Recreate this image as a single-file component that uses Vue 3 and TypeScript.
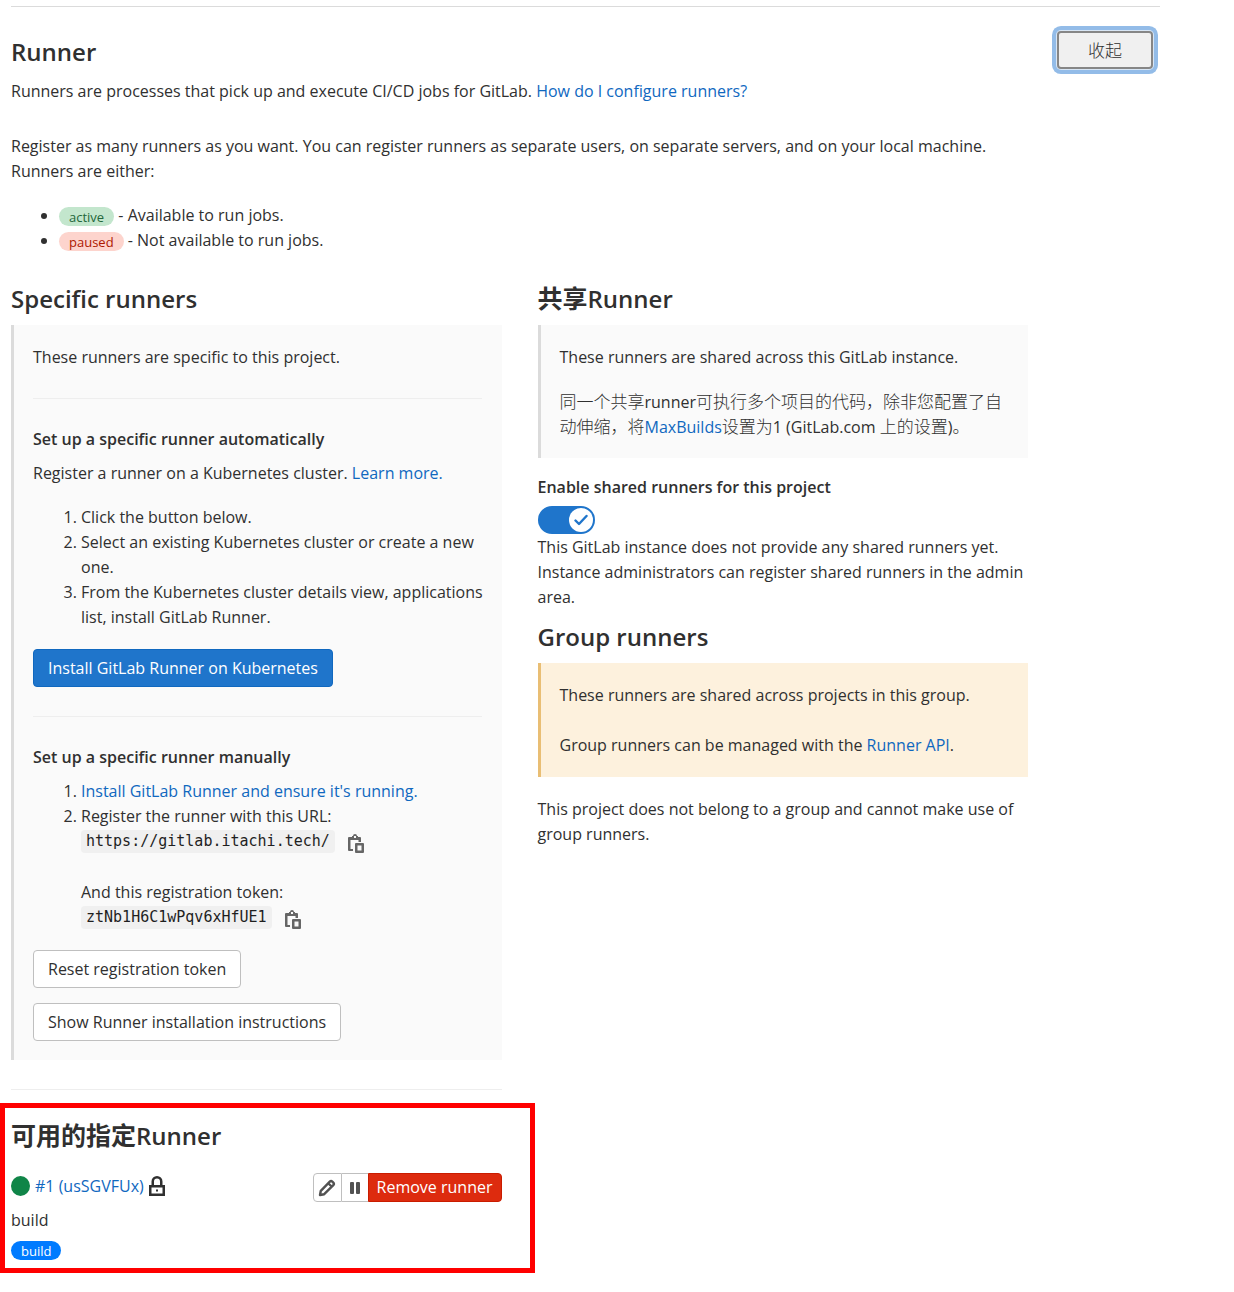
<script setup lang="ts">
import { ref } from 'vue'

const sharedEnabled = ref(true)

const installSteps: string[] = [
  'Click the button below.',
  'Select an existing Kubernetes cluster or create a new one.',
  'From the Kubernetes cluster details view, applications list, install GitLab Runner.',
]

const registrationUrl = 'https://gitlab.itachi.tech/'
const registrationToken = 'ztNb1H6C1wPqv6xHfUE1'
</script>

<template>
  <main class="settings">
    <header class="header">
      <div>
        <h2 class="title">Runner</h2>
        <p class="text">
          Runners are processes that pick up and execute CI/CD jobs for GitLab.
          <a href="#configure">How do I configure runners?</a>
        </p>
      </div>
      <button type="button" class="collapse"><span class="cjk">收起</span></button>
    </header>

    <section class="intro">
      <p class="text">
        Register as many runners as you want. You can register runners as separate users, on separate servers, and on your local machine.<br />
        Runners are either:
      </p>
      <ul class="states">
        <li><span class="badge badge-active">active</span> - Available to run jobs.</li>
        <li><span class="badge badge-paused">paused</span> - Not available to run jobs.</li>
      </ul>
    </section>

    <div class="columns">
      <div class="column">
        <h2 class="title">Specific runners</h2>
        <div class="callout">
          <p class="text">These runners are specific to this project.</p>
          <hr class="rule" />
          <h3 class="subtitle">Set up a specific runner automatically</h3>
          <p class="text">Register a runner on a Kubernetes cluster. <a href="#learn">Learn more.</a></p>
          <ol class="steps spaced">
            <li v-for="step in installSteps" :key="step">{{ step }}</li>
          </ol>
          <button type="button" class="btn btn-confirm">Install GitLab Runner on Kubernetes</button>
          <hr class="rule" />
          <h3 class="subtitle">Set up a specific runner manually</h3>
          <ol class="steps">
            <li><a href="#install">Install GitLab Runner and ensure it's running.</a></li>
            <li>
              Register the runner with this URL:
              <div class="copy-row">
                <code>{{ registrationUrl }}</code>
                <button type="button" class="copy" aria-label="Copy URL">
                  <svg viewBox="0 0 16 19" width="16" height="19">
                    <path fill="currentColor" fill-rule="evenodd" d="M4 2H5Q5 0 7 0T9 2H10V3H12Q13 3 13 4V8H10.500V6H2.500V15H5V17H1Q0 17 0 16V4Q0 3 1 3H4ZM6 2V4H8V2ZM8 9H15Q16 9 16 10V18Q16 19 15 19H8Q7 19 7 18V10Q7 9 8 9ZM9.500 11.500V16.500H13.500V11.500Z" />
                  </svg>
                </button>
              </div>
              <div class="token-label">And this registration token:</div>
              <div class="copy-row">
                <code>{{ registrationToken }}</code>
                <button type="button" class="copy" aria-label="Copy token">
                  <svg viewBox="0 0 16 19" width="16" height="19">
                    <path fill="currentColor" fill-rule="evenodd" d="M4 2H5Q5 0 7 0T9 2H10V3H12Q13 3 13 4V8H10.500V6H2.500V15H5V17H1Q0 17 0 16V4Q0 3 1 3H4ZM6 2V4H8V2ZM8 9H15Q16 9 16 10V18Q16 19 15 19H8Q7 19 7 18V10Q7 9 8 9ZM9.500 11.500V16.500H13.500V11.500Z" />
                  </svg>
                </button>
              </div>
            </li>
          </ol>
          <div class="actions">
            <button type="button" class="btn">Reset registration token</button>
            <button type="button" class="btn">Show Runner installation instructions</button>
          </div>
        </div>
        <hr class="divider" />
        <section class="available">
          <h2 class="title"><span class="cjk">可用的指定</span>Runner</h2>
          <div class="runner">
            <div class="runner-name">
              <span class="status"></span>
              <a href="#runner-1">#1 (usSGVFUx)</a>
              <svg class="lock" viewBox="0 0 16 20" width="16" height="20">
                <path fill="currentColor" fill-rule="evenodd" d="M2.500 9V5.500a5.500 5.500 0 0 1 11 0V9H16V20H0V9ZM5 9H11V5.500a3 3 0 0 0-6 0ZM2.500 11.500V17.500H13.500V11.500ZM7 13.500H9V15.500H7Z" />
              </svg>
            </div>
            <div class="group">
              <button type="button" class="small edit" aria-label="Edit">
                <svg viewBox="0 0 18 18" width="18" height="18" fill="none" stroke="currentColor" stroke-width="2.400" stroke-linejoin="round">
                  <path d="M2 16l.8-4.200L11.800 2.700a1.800 1.800 0 0 1 2.500 0l1 1a1.800 1.800 0 0 1 0 2.500L6.200 15.200zM10.500 4.500l3 3" />
                </svg>
              </button>
              <button type="button" class="small pause" aria-label="Pause">
                <svg viewBox="0 0 10 14" width="10" height="14" fill="currentColor">
                  <rect x="0" y="1" width="4" height="12" rx="1" />
                  <rect x="6" y="1" width="4" height="12" rx="1" />
                </svg>
              </button>
              <button type="button" class="small remove">Remove runner</button>
            </div>
          </div>
          <p class="text description">build</p>
          <span class="badge badge-tag">build</span>
        </section>
      </div>

      <div class="column">
        <h2 class="title"><span class="cjk">共享</span>Runner</h2>
        <div class="callout shared">
          <p class="text">These runners are shared across this GitLab instance.</p>
          <p class="text chinese">
            <span class="cjk">同一个共享</span>runner<span class="cjk">可执行多个项目的代码，除非您配置了自<br />动伸缩，将</span><a href="#maxbuilds">MaxBuilds</a><span class="cjk">设置为</span>1 (GitLab.com <span class="cjk">上的设置</span>)<span class="cjk">。</span>
          </p>
        </div>
        <label class="toggle-label" for="shared-toggle">Enable shared runners for this project</label>
        <span class="toggle">
          <input id="shared-toggle" v-model="sharedEnabled" type="checkbox" />
          <svg class="tick" viewBox="0 0 14 12" width="14" height="12" fill="none" stroke="currentColor" stroke-width="2.400" stroke-linecap="round" stroke-linejoin="round">
            <path d="M1.500 6.500L5 10L12.500 2" />
          </svg>
        </span>
        <p class="text">
          This GitLab instance does not provide any shared runners yet. Instance administrators can register shared runners in the admin area.
        </p>
        <h2 class="title group-title">Group runners</h2>
        <div class="callout warning">
          <p class="text">These runners are shared across projects in this group.</p>
          <p class="text managed">Group runners can be managed with the <a href="#api">Runner API</a>.</p>
        </div>
        <p class="text no-group">This project does not belong to a group and cannot make use of group runners.</p>
      </div>
    </div>
  </main>
</template>

<style>
body {
  background: #fff;
}
</style>

<style scoped>
* {
  box-sizing: border-box;
}
.settings {
  margin: 6px 74px 0 11px;
  border-top: 1px solid #dbdbdb;
  color: #303030;
  font-family: "Open Sans", "Noto Sans CJK SC", sans-serif;
  font-size: 16px;
  line-height: 25px;
}
a {
  color: #1068bf;
  text-decoration: none;
}
.cjk {
  font-family: "Noto Sans CJK SC", sans-serif;
  font-size: 17px;
  font-weight: 300;
  line-height: 1;
}
.title {
  margin: 0;
  font-size: 24px;
  font-weight: 600;
  line-height: 30px;
}
.title .cjk {
  font-size: 25px;
  font-weight: 700;
}
.text {
  margin: 0;
}
.header {
  display: flex;
  justify-content: space-between;
  align-items: flex-start;
  padding-top: 24px;
}
.header .title {
  margin: 6px 0 12px;
}
.collapse {
  width: 96px;
  height: 38px;
  margin-right: 7px;
  padding: 2px 0 0;
  border: 2px solid #868686;
  border-radius: 4px;
  background: #f0f0f0;
  box-shadow: 0 0 0 1px #d8e6f5, 0 0 0 5px #93bce8;
  color: #303030;
  font: inherit;
}
.intro {
  padding-top: 30px;
}
.states {
  margin: 19px 0 0;
  padding-left: 48px;
}
.badge {
  display: inline-block;
  height: 19px;
  padding: 0 10px;
  border-radius: 10px;
  font-size: 13px;
  line-height: 20px;
  vertical-align: middle;
}
.badge-active {
  background: #c3e6cd;
  color: #24663b;
}
.badge-paused {
  background: #fdd4cd;
  color: #ae1800;
}
.badge-tag {
  display: block;
  width: max-content;
  background: #007bff;
  color: #fff;
}
.columns {
  display: grid;
  grid-template-columns: 1fr 1fr;
  gap: 36px;
  margin-right: 132px;
  padding-top: 31px;
}
.column {
  min-width: 0;
}
.callout {
  margin-top: 11px;
  padding: 20px 20px 19px 19px;
  border-left: 3px solid #dbdbdb;
  background: #fafafa;
}
.rule {
  height: 1px;
  margin: 28px 0;
  border: 0;
  background: #eee;
}
.subtitle {
  margin: 0 0 9px;
  font-size: 16px;
  font-weight: 600;
}
.steps {
  margin: 0;
  padding-left: 48px;
}
.steps.spaced {
  margin: 19px -16px 19px 0;
}
.btn {
  display: block;
  height: 38px;
  padding: 0 14px;
  border: 1px solid #bfbfbf;
  border-radius: 4px;
  background: #fff;
  color: #303030;
  font: inherit;
}
.btn-confirm {
  margin-bottom: 29px;
  border-color: #1068bf;
  background: #1f75cb;
  color: #fff;
}
.copy-row {
  display: flex;
  align-items: flex-start;
  gap: 13px;
  height: 27px;
}
code {
  height: 23px;
  margin-top: 1px;
  padding: 0 5px;
  border-radius: 4px;
  background: #f0f0f0;
  color: #1f1f1f;
  font-family: "DejaVu Sans Mono", monospace;
  font-size: 15px;
  line-height: 23px;
}
.copy {
  height: 19px;
  margin-top: 5px;
  padding: 0;
  border: 0;
  background: none;
  color: #666;
}
.copy svg {
  display: block;
}
.token-label {
  margin-top: 24px;
}
.actions {
  display: flex;
  flex-direction: column;
  align-items: flex-start;
  gap: 15px;
  margin-top: 18px;
}
.divider {
  height: 1px;
  margin: 29px 0 13px;
  border: 0;
  background: #eee;
}
.available {
  margin: 0 -33px 0 -11px;
  padding: 13px 28px 8px 6px;
  border: 5px solid #f00;
}
.runner {
  display: flex;
  align-items: center;
  justify-content: space-between;
  margin-top: 22px;
}
.runner-name {
  display: flex;
  align-items: center;
  gap: 5px;
  height: 26px;
  align-self: flex-start;
}
.status {
  width: 19px;
  height: 20px;
  border-radius: 50%;
  background: #108548;
}
.group {
  display: flex;
}
.small {
  display: flex;
  align-items: center;
  justify-content: center;
  height: 29px;
  padding: 0;
  border: 1px solid #bfbfbf;
  background: #fff;
  color: #525252;
  font: inherit;
}
.edit {
  width: 29px;
  border-radius: 4px 0 0 4px;
}
.pause {
  width: 26px;
  border-width: 1px 0;
}
.remove {
  padding: 0 8px;
  border-color: #c91c00;
  border-radius: 0 4px 4px 0;
  background: #dd2b0e;
  color: #fff;
}
.description {
  margin: 6px 0 8px;
}
.shared {
  padding-bottom: 18px;
}
.shared .chinese {
  margin-top: 20px;
}
.toggle-label {
  display: block;
  margin-top: 17px;
  font-weight: 600;
}
.toggle {
  display: grid;
  width: 57px;
  height: 28px;
  margin: 6px 0 1px;
  align-items: center;
}
.toggle > * {
  grid-area: 1 / 1;
}
.toggle input {
  display: flex;
  justify-content: flex-end;
  width: 57px;
  height: 28px;
  margin: 0;
  padding: 2px;
  border-radius: 14px;
  background: #868686;
  appearance: none;
}
.toggle input:checked {
  background: #1f75cb;
}
.toggle input::before {
  width: 24px;
  height: 24px;
  border-radius: 50%;
  background: #fff;
  content: "";
}
.tick {
  justify-self: end;
  margin-right: 7px;
  color: #1f75cb;
  pointer-events: none;
}
.group-title {
  margin-top: 12px;
}
.warning {
  border-color: #e9be74;
  background: #fdf1dd;
}
.managed {
  margin-top: 25px;
}
.no-group {
  margin-top: 20px;
}
</style>
